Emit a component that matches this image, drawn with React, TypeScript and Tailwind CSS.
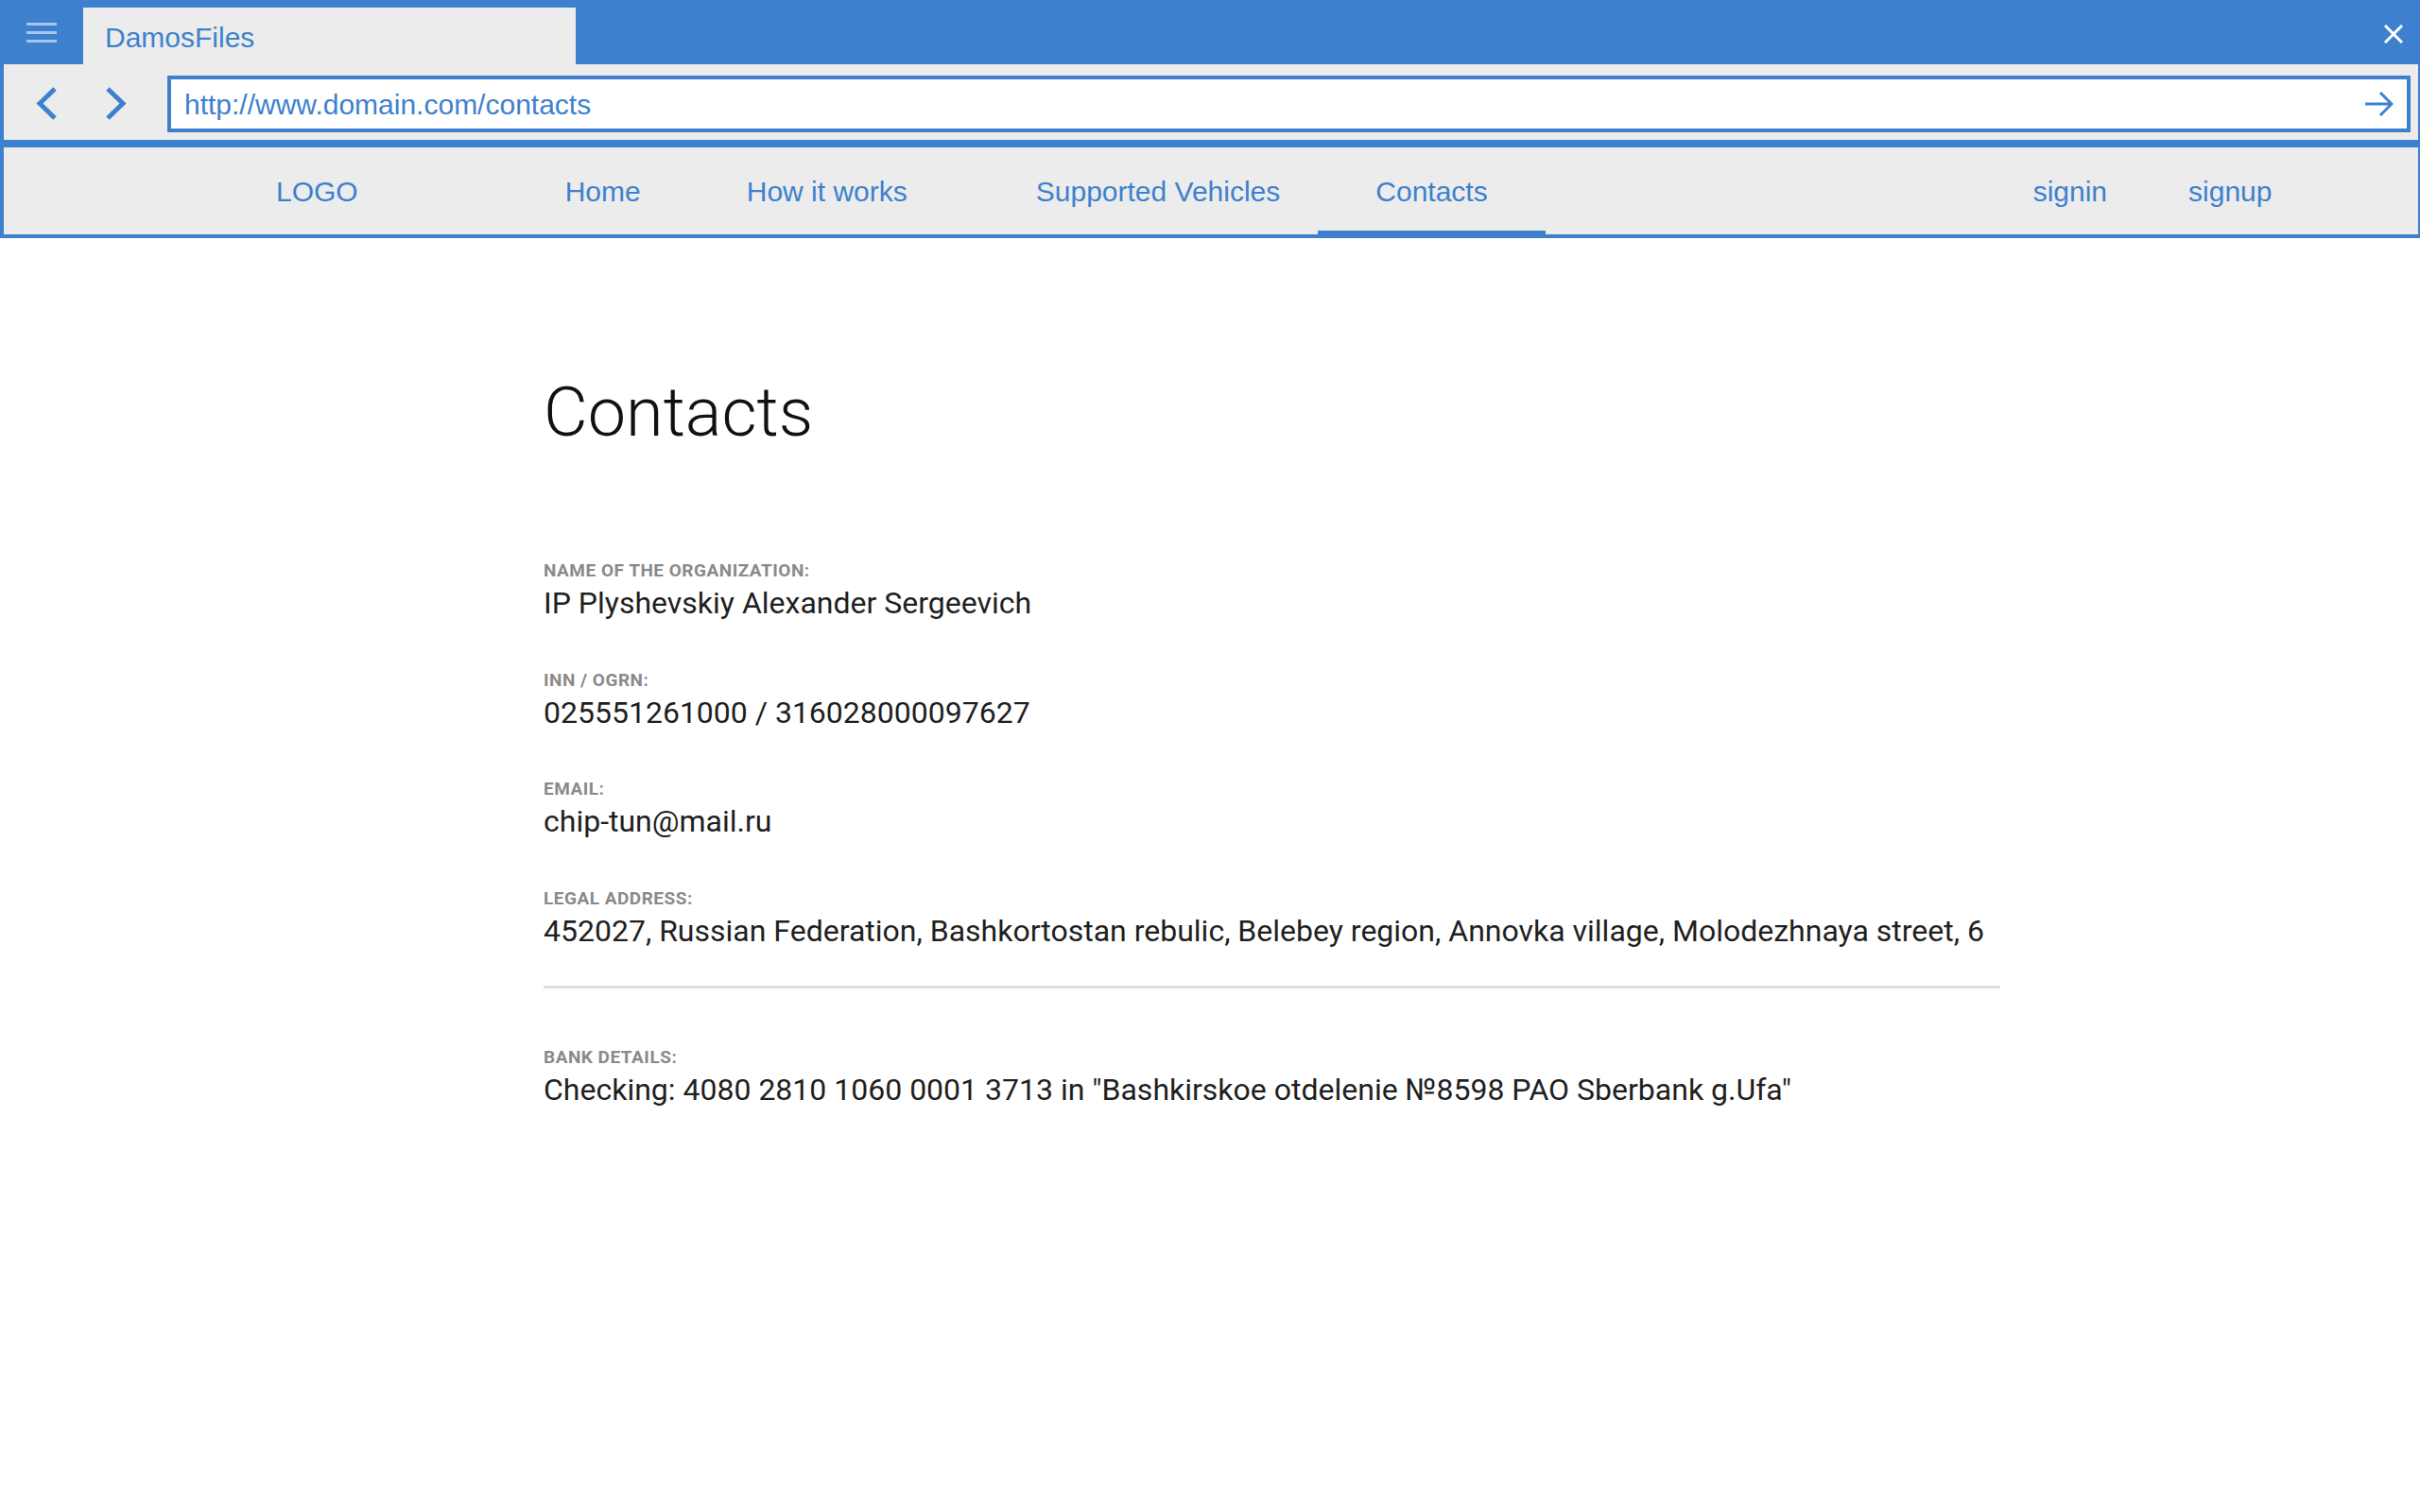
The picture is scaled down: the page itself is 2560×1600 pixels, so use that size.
import React from 'react';

const navLinks = [
  { label: 'LOGO', ml: 'ml-[288px]' },
  { label: 'Home', ml: 'ml-[219px]' },
  { label: 'How it works', ml: 'ml-[112px]' },
  { label: 'Supported Vehicles', ml: 'ml-[136px]' },
];

const details = [
  { label: 'Name of the organization:', value: 'IP Plyshevskiy Alexander Sergeevich' },
  { label: 'INN / OGRN:', value: '025551261000 / 316028000097627' },
  { label: 'Email:', value: 'chip-tun@mail.ru' },
  {
    label: 'Legal address:',
    value: '452027, Russian Federation, Bashkortostan rebulic, Belebey region, Annovka village, Molodezhnaya street, 6',
  },
];

const Field = ({ label, value }: { label: string; value: string }) => (
  <div>
    <div className="text-[19px] leading-[18px] font-bold uppercase tracking-[0.5px] text-[#8a8a8a]">{label}</div>
    <div className="mt-[10px] text-[32px] leading-[30px] text-[#1f1f1f]">{value}</div>
  </div>
);

const App = () => {
  return (
    <div className="min-h-screen w-full bg-white font-['Liberation_Sans',Arial,sans-serif]">
      {/* window title bar */}
      <div className="flex h-[68px] bg-[#3d81ce]">
        <div className="flex w-[88px] items-center justify-center">
          <div className="flex w-[32px] flex-col gap-[6px]">
            <span className="h-[3px] bg-[#a9c6ea]"></span>
            <span className="h-[3px] bg-[#a9c6ea]"></span>
            <span className="h-[3px] bg-[#a9c6ea]"></span>
          </div>
        </div>
        <div className="mt-[8px] flex w-[521px] items-center bg-[#ececec] pl-[23px] pt-[2px] text-[30px] text-[#3d81ce]">
          DamosFiles
        </div>
        <div className="flex-1"></div>
        <div className="mr-[18px] flex items-center">
          <svg width="20" height="20" viewBox="0 0 20 20" className="mt-[4px]">
            <path d="M1 1 L19 19 M19 1 L1 19" stroke="white" strokeWidth="3" fill="none" />
          </svg>
        </div>
      </div>

      {/* address bar */}
      <div className="flex h-[80px] items-center border-l-4 border-r-2 border-[#3d81ce] bg-[#ececec] pt-[3px]">
        <svg width="22" height="35" viewBox="0 0 22 35" className="ml-[34px]">
          <polyline points="20,2 4,17.5 20,33" stroke="#3d81ce" strokeWidth="5" fill="none" />
        </svg>
        <svg width="22" height="35" viewBox="0 0 22 35" className="ml-[52px]">
          <polyline points="2,2 18,17.5 2,33" stroke="#3d81ce" strokeWidth="5" fill="none" />
        </svg>
        <div className="ml-[43px] mr-[8px] flex h-[60px] flex-1 items-center border-4 border-[#3d81ce] bg-white pl-[14px] pr-[14px]">
          <span className="flex-1 pt-[2px] text-[30px] text-[#3d81ce]">http://www.domain.com/contacts</span>
          <svg width="30" height="28" viewBox="0 0 30 28">
            <path d="M0 14 L28 14 M16 2 L28 14 L16 26" stroke="#3d81ce" strokeWidth="3" fill="none" />
          </svg>
        </div>
      </div>
      <div className="h-[8px] bg-[#3d81ce]"></div>

      {/* site nav */}
      <div className="flex h-[96px] items-center border-b-4 border-l-4 border-r-2 border-[#3d81ce] bg-[#ececec] text-[30px] text-[#3d81ce]">
        {navLinks.map((link) => (
          <span key={link.label} className={link.ml}>
            {link.label}
          </span>
        ))}
        <div className="relative ml-[40px] flex self-stretch items-center px-[61px]">
          Contacts
          <div className="absolute -bottom-[4px] left-0 right-0 h-[8px] bg-[#3d81ce]"></div>
        </div>
        <span className="ml-[516px]">signin</span>
        <span className="ml-[86px]">signup</span>
      </div>

      {/* page content */}
      <div className="ml-[575px] w-[1541px] pt-[149px] font-['Roboto',sans-serif]">
        <h1 className="text-[72px] leading-[72px] font-light text-[#111111]">Contacts</h1>
        <div className="mt-[122px] flex flex-col gap-[57.5px]">
          {details.map((d) => (
            <Field key={d.label} label={d.label} value={d.value} />
          ))}
        </div>
        <div className="mt-[43.5px] h-[3px] bg-[#dedede]"></div>
        <div className="mt-[64px]">
          <Field
            label="Bank details:"
            value={'Checking: 4080 2810 1060 0001 3713 in "Bashkirskoe otdelenie №8598 PAO Sberbank g.Ufa"'}
          />
        </div>
      </div>
    </div>
  );
};

export default App;
